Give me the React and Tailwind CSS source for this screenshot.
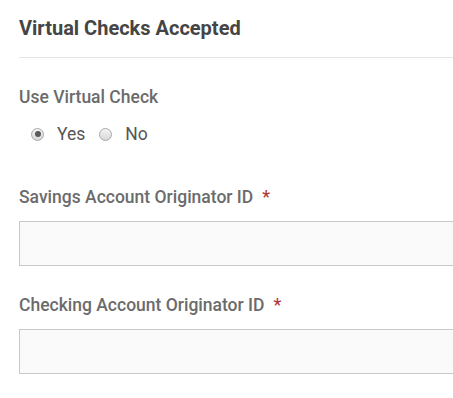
import { useState } from 'react';

const Radio = ({ checked, label, onClick }) => (
  <label className="flex cursor-pointer items-center" onClick={onClick}>
    <span className="flex h-[13px] w-[13px] items-center justify-center rounded-full border border-[#a8a8a8] bg-gradient-to-b from-[#f4f4f4] to-[#d8d8d8]">
      {checked && <span className="h-[6px] w-[6px] rounded-full bg-[#5a5a5a]" />}
    </span>
    <span className="ml-[13px] text-[17.5px] leading-[20px] text-[#555]">{label}</span>
  </label>
);

const Field = ({ label }) => (
  <div className="flex flex-col">
    <div className="flex items-center text-[17.5px] font-medium leading-[20px] text-[#6b6b6b]">
      {label}
      <span className="ml-[9px] text-[#b03a3a]">*</span>
    </div>
    <input
      type="text"
      className="mt-[14px] h-[45px] w-[calc(100%+20px)] border border-[#c8c8c8] bg-[#fafafa] px-3 outline-none"
    />
  </div>
);

const App = () => {
  const [useCheck, setUseCheck] = useState(true);

  return (
    <div className="min-h-screen overflow-hidden bg-white pl-[19px] font-['Roboto',sans-serif]">
      <h2 className="pt-[16px] text-[20px] font-bold leading-[24px] text-[#454545]">
        Virtual Checks Accepted
      </h2>
      <div className="mt-[17px] border-t border-[#e5e5e5]" />

      <div className="mt-[29px] text-[17.5px] font-medium leading-[20px] text-[#6b6b6b]">
        Use Virtual Check
      </div>
      <div className="mt-[17px] flex items-center gap-[14px] pl-[12px]">
        <Radio checked={useCheck} label="Yes" onClick={() => setUseCheck(true)} />
        <Radio checked={!useCheck} label="No" onClick={() => setUseCheck(false)} />
      </div>

      <div className="mt-[43px] flex flex-col gap-[29px]">
        <Field label="Savings Account Originator ID" />
        <Field label="Checking Account Originator ID" />
      </div>
    </div>
  );
};

export default App;
